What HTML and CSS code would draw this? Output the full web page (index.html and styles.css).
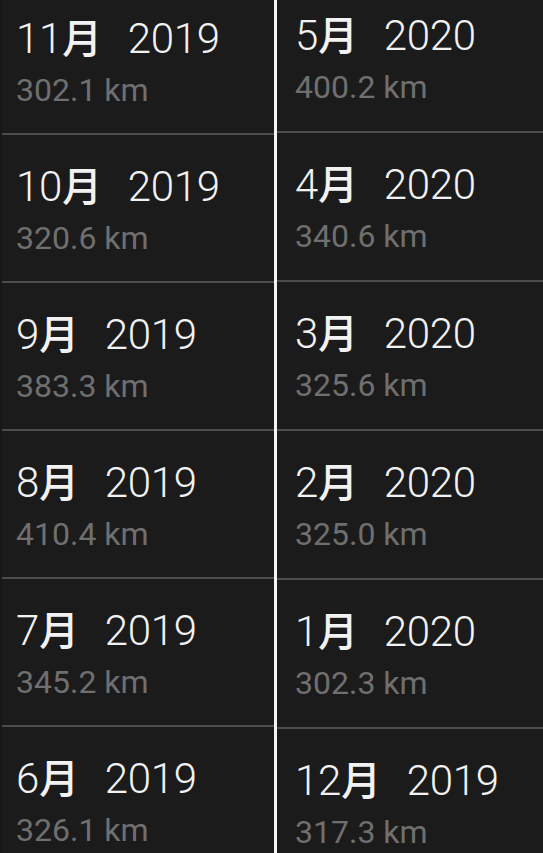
FILE: index.html
```html
<!DOCTYPE html>
<html lang="zh">
<head>
    <meta charset="UTF-8">
    <meta name="viewport" content="width=device-width, initial-scale=1.0">
    <title>月度里程</title>
    <link rel="stylesheet" href="styles.css">
</head>
<body>
    <div class="months">
        <!-- левая колонка -->
        <div class="month-col left">
            <div class="month-row"><p class="month-title">11<span class="yue">月</span><span class="year">2019</span></p><p class="month-dist">302.1 km</p></div>
            <div class="month-row"><p class="month-title">10<span class="yue">月</span><span class="year">2019</span></p><p class="month-dist">320.6 km</p></div>
            <div class="month-row"><p class="month-title">9<span class="yue">月</span><span class="year">2019</span></p><p class="month-dist">383.3 km</p></div>
            <div class="month-row"><p class="month-title">8<span class="yue">月</span><span class="year">2019</span></p><p class="month-dist">410.4 km</p></div>
            <div class="month-row"><p class="month-title">7<span class="yue">月</span><span class="year">2019</span></p><p class="month-dist">345.2 km</p></div>
            <div class="month-row"><p class="month-title">6<span class="yue">月</span><span class="year">2019</span></p><p class="month-dist">326.1 km</p></div>
        </div>

        <!-- правая колонка -->
        <div class="month-col right">
            <div class="month-row"><p class="month-title">5<span class="yue">月</span><span class="year">2020</span></p><p class="month-dist">400.2 km</p></div>
            <div class="month-row"><p class="month-title">4<span class="yue">月</span><span class="year">2020</span></p><p class="month-dist">340.6 km</p></div>
            <div class="month-row"><p class="month-title">3<span class="yue">月</span><span class="year">2020</span></p><p class="month-dist">325.6 km</p></div>
            <div class="month-row"><p class="month-title">2<span class="yue">月</span><span class="year">2020</span></p><p class="month-dist">325.0 km</p></div>
            <div class="month-row"><p class="month-title">1<span class="yue">月</span><span class="year">2020</span></p><p class="month-dist">302.3 km</p></div>
            <div class="month-row"><p class="month-title">12<span class="yue">月</span><span class="year">2019</span></p><p class="month-dist">317.3 km</p></div>
        </div>
    </div>
</body>
</html>
```

FILE: styles.css
```css
/* Сброс */
* {
    margin: 0;
    padding: 0;
    box-sizing: border-box;
}

body {
    background-color: #1b1b1b;
    font-family: Roboto, "Noto Sans CJK SC", sans-serif;
    height: 100vh;
    overflow: hidden;
}

.months {
    display: flex;
    height: 100%;
}

.month-col {
    display: flex;
    flex-direction: column;
}

.month-col.left {
    width: 277px;
    border-right: 3px solid #f4f4f4;
    margin-top: -13px;
    border-left: 2px solid #141a14;
}

.month-col.right {
    flex: 1;
    margin-top: -16px;
}

.month-row {
    height: 148px;
    flex-shrink: 0;
    padding: 28px 0 0 14px;
    border-bottom: 2px solid #4c4c4c;
}

.month-col.right .month-row {
    height: 149px;
    padding-left: 18px;
}

/* заголовок месяца */
.month-title {
    font-size: 42px;
    font-weight: 300;
    letter-spacing: -0.3px;
    line-height: 48px;
    color: #f2f2f2;
}

.month-title .yue {
    font-weight: 500;
    font-size: 40px;
}

.month-title .year {
    margin-left: 26px;
}

.month-dist {
    margin-top: 6px;
    font-size: 32px;
    line-height: 40px;
    color: #6f6f6f;
}
```
